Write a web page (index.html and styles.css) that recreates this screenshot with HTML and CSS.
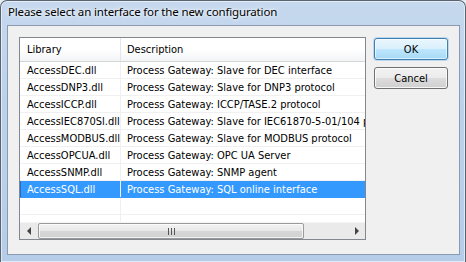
FILE: index.html
```html
<!DOCTYPE html>
<html>
<head>
    <meta charset="utf-8" />
    <title>Select interface</title>
    <link rel="stylesheet" href="styles.css">
</head>
<body>
    <div class="window">
        <div class="titlebar">Please select an interface for the new configuration</div>
        <div class="client">
            <div class="listview">
                <div class="header">
                    <div class="hcol lib">Library</div>
                    <div class="hcol desc">Description</div>
                </div>
                <div class="rows">
                    <div class="row"><div class="cell lib">AccessDEC.dll</div><div class="cell desc">Process Gateway: Slave for DEC interface</div></div>
                    <div class="row"><div class="cell lib">AccessDNP3.dll</div><div class="cell desc">Process Gateway: Slave for DNP3 protocol</div></div>
                    <div class="row"><div class="cell lib">AccessICCP.dll</div><div class="cell desc">Process Gateway: ICCP/TASE.2 protocol</div></div>
                    <div class="row"><div class="cell lib">AccessIEC870Sl.dll</div><div class="cell desc">Process Gateway: Slave for IEC61870-5-01/104 protocol</div></div>
                    <div class="row"><div class="cell lib">AccessMODBUS.dll</div><div class="cell desc">Process Gateway: Slave for MODBUS protocol</div></div>
                    <div class="row"><div class="cell lib">AccessOPCUA.dll</div><div class="cell desc">Process Gateway: OPC UA Server</div></div>
                    <div class="row"><div class="cell lib">AccessSNMP.dll</div><div class="cell desc">Process Gateway: SNMP agent</div></div>
                    <div class="row selected"><div class="cell lib">AccessSQL.dll</div><div class="cell desc">Process Gateway: SQL online interface</div></div>
                    <div class="row"><div class="cell lib"></div><div class="cell desc"></div></div>
                    <div class="row filler"><div class="cell lib"></div><div class="cell desc"></div></div>
                </div>
                <div class="hscroll">
                    <div class="sbtn"><span class="tri-left"></span></div>
                    <div class="track">
                        <div class="thumb"><span class="grip"></span></div>
                    </div>
                    <div class="sbtn"><span class="tri-right"></span></div>
                </div>
            </div>
            <div class="buttons">
                <button class="btn default">OK</button>
                <button class="btn">Cancel</button>
            </div>
        </div>
    </div>
</body>
</html>
```

FILE: styles.css
```css
*, *:before, *:after{
    box-sizing:border-box;
}
html, body{
    margin:0;
    padding:0;
    background:#e9eef4;
}
.window{
    width:466px;
    height:262px;
    border:1px solid #5a6470;
    border-bottom:none;
    border-radius:7px 7px 0 0;
    background:linear-gradient(to bottom, #c5d8ee 0%, #bcd2ec 40%, #b6cdea 100%);
    box-shadow:inset 0 0 0 1px rgba(255,255,255,0.55);
    overflow:hidden;
}
.titlebar{
    height:24px;
    padding:3px 0 0 7px;
    font-family:"Noto Sans", "Open Sans", sans-serif;
    font-size:11.5px;
    letter-spacing:-0.15px;
    color:#000;
    white-space:nowrap;
    text-shadow:0 0 6px #fff, 0 0 3px #fff;
}
.client{
    display:flex;
    align-items:flex-start;
    width:453px;
    height:230px;
    margin-left:6px;
    padding:11px 11px 14px 11px;
    background:#f0f0f0;
    border:1px solid #8b9aae;
}
.listview{
    display:flex;
    flex-direction:column;
    width:347px;
    height:203px;
    background:#fff;
    border:1px solid #828790;
    font-family:"DejaVu Sans Condensed", "DejaVu Sans", sans-serif;
    font-stretch:condensed;
    font-size:11px;
    color:#000;
}
.header{
    display:flex;
    height:24px;
    flex:none;
    background:linear-gradient(to bottom, #fff 0%, #fff 50%, #f3f4f6 100%);
    border-bottom:1px solid #d5d5d5;
}
.hcol{
    display:flex;
    align-items:center;
    padding-left:7px;
    white-space:nowrap;
}
.hcol.lib{
    width:101px;
    border-right:1px solid #e3e5e8;
}
.hcol.desc{
    flex:1;
    padding-left:6px;
}
.rows{
    flex:1;
    overflow:hidden;
}
.row{
    display:flex;
    height:17px;
    border-bottom:1px solid #f0f0f0;
}
.row.filler{
    height:8px;
    border-bottom:none;
}
.cell{
    display:flex;
    align-items:center;
    white-space:nowrap;
    overflow:hidden;
}
.cell.lib{
    width:101px;
    padding-left:7px;
    border-right:1px solid #f0f0f0;
}
.cell.desc{
    flex:1;
    padding-left:6px;
}
.row.selected{
    background:#3399ff;
    color:#fff;
    border-bottom-color:#3399ff;
}
.row.selected .cell.lib{
    border-right-color:#f0f0f0;
    box-shadow:inset 1px 0 0 #1f6fc0;
}
.hscroll{
    display:flex;
    height:17px;
    flex:none;
    background:#eaeaea;
    border-top:1px solid #f4f4f4;
}
.sbtn{
    width:17px;
    display:flex;
    align-items:center;
    justify-content:center;
}
.tri-left{
    width:0;
    height:0;
    border-top:4px solid transparent;
    border-bottom:4px solid transparent;
    border-right:4px solid #444;
}
.tri-right{
    width:0;
    height:0;
    border-top:4px solid transparent;
    border-bottom:4px solid transparent;
    border-left:4px solid #444;
}
.track{
    flex:1;
    padding:0 44px 0 1px;
}
.thumb{
    height:16px;
    display:flex;
    align-items:center;
    justify-content:center;
    border:1px solid #9a9a9a;
    border-radius:2px;
    background:linear-gradient(to bottom, #f3f3f3 0%, #e8e8e8 50%, #d6d6d6 51%, #d2d2d2 100%);
    box-shadow:inset 0 0 0 1px rgba(255,255,255,0.7);
}
.grip{
    width:7px;
    height:7px;
    background:repeating-linear-gradient(to right, #555 0px, #555 1px, transparent 1px, transparent 3px);
}
.buttons{
    display:flex;
    flex-direction:column;
    gap:7px;
    margin:1px 0 0 8px;
}
.btn{
    width:74px;
    height:22px;
    padding:0;
    font-family:"DejaVu Sans Condensed", "DejaVu Sans", sans-serif;
    font-stretch:condensed;
    font-size:11px;
    color:#000;
    border:1px solid #707070;
    border-radius:3px;
    background:linear-gradient(to bottom, #f2f2f2 0%, #ebebeb 50%, #dddddd 51%, #cfcfcf 100%);
    box-shadow:inset 0 0 0 1px rgba(255,255,255,0.8);
}
.btn.default{
    border-color:#3c7fb1;
    background:linear-gradient(to bottom, #eaf6fd 0%, #d9f0fc 50%, #bee6fd 51%, #a7d9f5 100%);
    box-shadow:inset 0 0 0 1px rgba(255,255,255,0.6), 0 0 0 1px rgba(100,170,230,0.35);
}
```
